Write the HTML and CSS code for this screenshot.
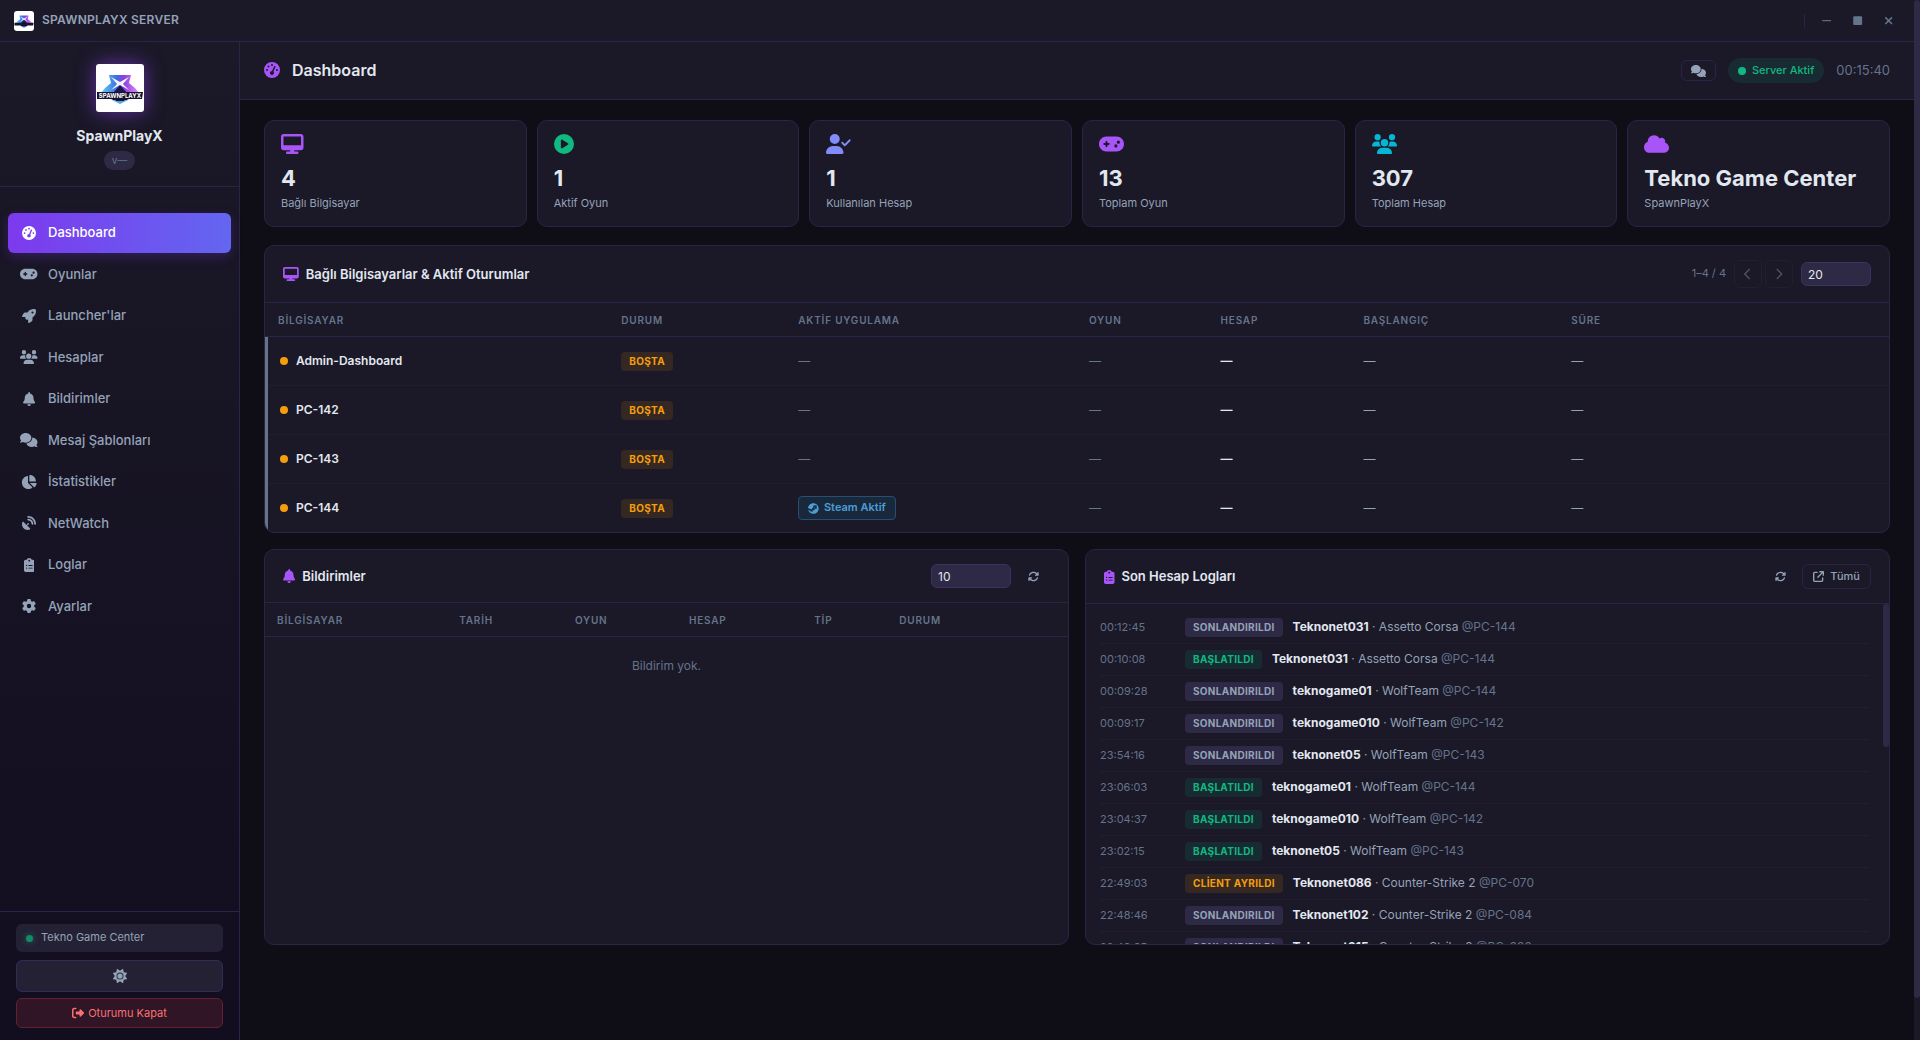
FILE: index.html
```html
<!DOCTYPE html>
<html lang="tr">
<head>
    <meta charset="UTF-8">
    <meta name="viewport" content="width=device-width, initial-scale=1.0">
    <title>SpawnPlayX Server</title>
    <link rel="stylesheet" href="styles.css">
</head>
<body>

<!-- Icon shapes, reused with <use> -->
<svg class="icon-defs" aria-hidden="true">
    <defs>
        <path id="i-gauge" d="M0 256a256 256 0 1 1 512 0A256 256 0 1 1 0 256zM288 96a32 32 0 1 0 -64 0 32 32 0 1 0 64 0zM256 416c35.3 0 64-28.7 64-64c0-17.4-6.9-33.1-18.1-44.6L366 161.7c5.3-12.1-.2-26.3-12.3-31.6s-26.3 .2-31.6 12.3L257.9 288c-.6 0-1.3 0-1.9 0c-35.3 0-64 28.7-64 64s28.7 64 64 64zM176 144a32 32 0 1 0 -64 0 32 32 0 1 0 64 0zM96 288a32 32 0 1 0 0-64 32 32 0 1 0 0 64zm352-32a32 32 0 1 0 -64 0 32 32 0 1 0 64 0z"/>
        <path id="i-gamepad" d="M192 64C86 64 0 150 0 256S86 448 192 448H448c106 0 192-86 192-192s-86-192-192-192H192zM496 168a40 40 0 1 1 0 80 40 40 0 1 1 0-80zM392 304a40 40 0 1 1 80 0 40 40 0 1 1 -80 0zM168 200c0-13.3 10.7-24 24-24s24 10.7 24 24v32h32c13.3 0 24 10.7 24 24s-10.7 24-24 24H216v32c0 13.3-10.7 24-24 24s-24-10.7-24-24V280H136c-13.3 0-24-10.7-24-24s10.7-24 24-24h32V200z"/>
        <path id="i-rocket" d="M156.6 384.9L125.7 354c-8.5-8.5-11.5-20.8-7.7-32.2c3-8.9 7-20.5 11.8-33.8L24 288c-8.6 0-16.6-4.6-20.9-12.1s-4.2-16.7 .2-24.1l52.5-88.5c13-21.9 36.5-35.3 61.9-35.3l82.3 0c2.4-4 4.8-7.7 7.2-11.3C289.1-4.1 411.1-8.1 483.9 5.3c11.6 2.1 20.6 11.2 22.8 22.8c13.4 72.9 9.3 194.8-111.4 276.7c-3.5 2.4-7.3 4.8-11.3 7.2v82.3c0 25.4-13.4 49-35.3 61.9l-88.5 52.5c-7.4 4.4-16.6 4.5-24.1 .2s-12.1-12.2-12.1-20.9V380.8c-14.1 4.9-26.4 8.9-35.7 11.9c-11.2 3.6-23.4 .5-31.8-7.8zM384 168a40 40 0 1 0 0-80 40 40 0 1 0 0 80z"/>
        <path id="i-users" d="M144 0a80 80 0 1 1 0 160A80 80 0 1 1 144 0zM512 0a80 80 0 1 1 0 160A80 80 0 1 1 512 0zM0 298.7C0 239.8 47.8 192 106.7 192h42.7c15.9 0 31 3.5 44.6 9.7c-1.3 7.2-1.9 14.7-1.9 22.3c0 38.2 16.8 72.5 43.3 96c-.2 0-.4 0-.7 0H21.3C9.6 320 0 310.4 0 298.7zM405.3 320c-.2 0-.4 0-.7 0c26.6-23.5 43.3-57.8 43.3-96c0-7.6-.7-15-1.9-22.3c13.6-6.3 28.7-9.7 44.6-9.7h42.7C592.2 192 640 239.8 640 298.7c0 11.8-9.6 21.3-21.3 21.3H405.3zM224 224a96 96 0 1 1 192 0 96 96 0 1 1 -192 0zM128 485.3C128 411.7 187.7 352 261.3 352H378.7C452.3 352 512 411.7 512 485.3c0 14.7-11.9 26.7-26.7 26.7H154.7c-14.7 0-26.7-11.9-26.7-26.7z"/>
        <path id="i-bell" d="M224 0c-17.7 0-32 14.3-32 32V51.2C119 66 64 130.6 64 208v18.8c0 47-17.3 92.4-48.5 127.6l-7.4 8.3c-8.4 9.4-10.4 22.9-5.3 34.4S19.4 416 32 416H416c12.6 0 24-7.4 29.2-18.9s3.1-25-5.3-34.4l-7.4-8.3C401.3 319.2 384 273.9 384 226.8V208c0-77.4-55-142-128-156.8V32c0-17.7-14.3-32-32-32zm45.3 493.3c12-12 18.7-28.3 18.7-45.3H224 160c0 17 6.7 33.3 18.7 45.3s28.3 18.7 45.3 18.7s33.3-6.7 45.3-18.7z"/>
        <path id="i-comments" d="M208 352c114.9 0 208-78.8 208-176S322.9 0 208 0S0 78.8 0 176c0 38.6 14.7 74.3 39.6 103.4c-3.5 9.4-8.7 17.7-14.2 24.7c-4.8 6.2-9.7 11-13.3 14.3c-1.8 1.6-3.3 2.9-4.3 3.7c-.5 .4-.9 .7-1.1 .8l-.2 .2C1 327.2-1.4 334.4 .8 340.9S9.1 352 16 352c21.8 0 43.8-5.6 62.1-12.5c9.2-3.5 17.8-7.4 25.2-11.4C134.1 343.3 169.8 352 208 352zM448 176c0 112.3-99.1 196.9-216.5 207C255.8 457.4 336.4 512 432 512c38.2 0 73.9-8.7 104.7-23.9c7.5 4 16 7.9 25.2 11.4c18.3 6.9 40.3 12.5 62.1 12.5c6.9 0 13.1-4.5 15.2-11.1c2.1-6.6-.2-13.8-5.8-17.9l-.2-.2c-.2-.2-.6-.4-1.1-.8c-1-.8-2.5-2-4.3-3.7c-3.6-3.3-8.5-8.1-13.3-14.3c-5.5-7-10.7-15.4-14.2-24.7c24.9-29 39.6-64.7 39.6-103.4c0-92.8-84.9-168.9-192.6-175.5c.4 5.1 .6 10.3 .6 15.5z"/>
        <path id="i-pie" d="M304 240V16.6c0-9 7-16.6 16-16.6C443.7 0 544 100.3 544 224c0 9-7.6 16-16.6 16H304zM32 272C32 150.7 122.1 50.3 239 34.3c9.2-1.3 17 6.1 17 15.4V288L412.5 444.5c6.7 6.7 6.2 17.7-1.5 23.1C371.8 495.6 323.8 512 272 512C139.5 512 32 404.6 32 272zm526.4 16c9.3 0 16.6 7.8 15.4 17c-7.7 55.9-34.6 105.6-73.9 142.3c-6 5.6-15.4 5.2-21.2-.7L320 288H558.4z"/>
        <path id="i-dish" d="M192 32c0-17.7 14.3-32 32-32C383.1 0 512 128.9 512 288c0 17.7-14.3 32-32 32s-32-14.3-32-32C448 164.3 347.7 64 224 64c-17.7 0-32-14.3-32-32zM60.6 220.6L164.7 324.7l28.4-28.4c-.7-2.6-1.1-5.4-1.1-8.3c0-17.7 14.3-32 32-32s32 14.3 32 32s-14.3 32-32 32c-2.9 0-5.6-.4-8.3-1.1l-28.4 28.4L291.4 451.4c14.5 14.5 11.8 38.8-7.3 46.3C260.5 506.9 234.9 512 208 512C93.1 512 0 418.9 0 304c0-26.9 5.1-52.5 14.4-76.1c7.5-19 31.8-21.8 46.3-7.3zM224 96c106 0 192 86 192 192c0 17.7-14.3 32-32 32s-32-14.3-32-32c0-70.7-57.3-128-128-128c-17.7 0-32-14.3-32-32s14.3-32 32-32z"/>
        <path id="i-clipboard" d="M192 0c-41.8 0-77.4 26.7-90.5 64H64C28.7 64 0 92.7 0 128V448c0 35.3 28.7 64 64 64H320c35.3 0 64-28.7 64-64V128c0-35.3-28.7-64-64-64H282.5C269.4 26.7 233.8 0 192 0zm0 64a32 32 0 1 1 0 64 32 32 0 1 1 0-64zM72 272a24 24 0 1 1 48 0 24 24 0 1 1 -48 0zm104-16H304c8.8 0 16 7.2 16 16s-7.2 16-16 16H176c-8.8 0-16-7.2-16-16s7.2-16 16-16zM72 368a24 24 0 1 1 48 0 24 24 0 1 1 -48 0zm88 0c0-8.8 7.2-16 16-16H304c8.8 0 16 7.2 16 16s-7.2 16-16 16H176c-8.8 0-16-7.2-16-16z"/>
        <path id="i-gear" d="M495.9 166.6c3.2 8.7 .5 18.4-6.4 24.6l-43.3 39.4c1.1 8.3 1.7 16.8 1.7 25.4s-.6 17.1-1.7 25.4l43.3 39.4c6.9 6.2 9.6 15.9 6.4 24.6c-4.4 11.9-9.7 23.3-15.8 34.3l-4.7 8.1c-6.6 11-14 21.4-22.1 31.2c-5.9 7.2-15.7 9.6-24.5 6.8l-55.7-17.7c-13.4 10.3-28.2 18.9-44 25.4l-12.5 57.1c-2 9.1-9 16.3-18.2 17.8c-13.8 2.3-28 3.5-42.5 3.5s-28.7-1.2-42.5-3.5c-9.2-1.5-16.2-8.7-18.2-17.8l-12.5-57.1c-15.8-6.5-30.6-15.1-44-25.4L83.1 425.9c-8.8 2.8-18.6 .3-24.5-6.8c-8.1-9.8-15.5-20.2-22.1-31.2l-4.7-8.1c-6.1-11-11.4-22.4-15.8-34.3c-3.2-8.7-.5-18.4 6.4-24.6l43.3-39.4C64.6 273.1 64 264.6 64 256s.6-17.1 1.7-25.4L22.4 191.2c-6.9-6.2-9.6-15.9-6.4-24.6c4.4-11.9 9.7-23.3 15.8-34.3l4.7-8.1c6.6-11 14-21.4 22.1-31.2c5.9-7.2 15.7-9.6 24.5-6.8l55.7 17.7c13.4-10.3 28.2-18.9 44-25.4l12.5-57.1c2-9.1 9-16.3 18.2-17.8C227.3 1.2 241.5 0 256 0s28.7 1.2 42.5 3.5c9.2 1.5 16.2 8.7 18.2 17.8l12.5 57.1c15.8 6.5 30.6 15.1 44 25.4l55.7-17.7c8.8-2.8 18.6-.3 24.5 6.8c8.1 9.8 15.5 20.2 22.1 31.2l4.7 8.1c6.1 11 11.4 22.4 15.8 34.3zM256 336a80 80 0 1 0 0-160 80 80 0 1 0 0 160z"/>
        <path id="i-desktop" d="M64 0C28.7 0 0 28.7 0 64V352c0 35.3 28.7 64 64 64H240l-10.7 32H160c-17.7 0-32 14.3-32 32s14.3 32 32 32H416c17.7 0 32-14.3 32-32s-14.3-32-32-32H346.7L336 416H512c35.3 0 64-28.7 64-64V64c0-35.3-28.7-64-64-64H64zM512 64V288H64V64H512z"/>
        <path id="i-play" d="M0 256a256 256 0 1 1 512 0A256 256 0 1 1 0 256zM188.3 147.1c-7.6 4.2-12.3 12.3-12.3 20.9V344c0 8.7 4.7 16.7 12.3 20.9s16.8 4.1 24.3-.5l144-88c7.1-4.4 11.5-12.1 11.5-20.5s-4.4-16.1-11.5-20.5l-144-88c-7.4-4.5-16.7-4.7-24.3-.5z"/>
        <path id="i-user-check" d="M96 128a128 128 0 1 1 256 0A128 128 0 1 1 96 128zM0 482.3C0 383.8 79.8 304 178.3 304h91.4C368.2 304 448 383.8 448 482.3c0 16.4-13.3 29.7-29.7 29.7H29.7C13.3 512 0 498.7 0 482.3zM625 177L497 305c-9.4 9.4-24.6 9.4-33.9 0l-64-64c-9.4-9.4-9.4-24.6 0-33.9s24.6-9.4 33.9 0l47 47L591 143c9.4-9.4 24.6-9.4 33.9 0s9.4 24.6 0 33.9z"/>
        <path id="i-cloud" d="M0 336c0 79.5 64.5 144 144 144H512c70.7 0 128-57.3 128-128c0-61.9-44-113.6-102.4-125.4c4.1-10.7 6.4-22.4 6.4-34.6c0-53-43-96-96-96c-19.7 0-38.1 6-53.3 16.2C367 64.2 315.3 32 256 32C167.6 32 96 103.6 96 192c0 2.7 .1 5.4 .2 8.1C40.2 219.8 0 273.2 0 336z"/>
        <path id="i-left" d="M9.4 233.4c-12.5 12.5-12.5 32.8 0 45.3l192 192c12.5 12.5 32.8 12.5 45.3 0s12.5-32.8 0-45.3L77.3 256 246.6 86.6c12.5-12.5 12.5-32.8 0-45.3s-32.8-12.5-45.3 0l-192 192z"/>
        <path id="i-right" d="M310.6 233.4c12.5 12.5 12.5 32.8 0 45.3l-192 192c-12.5 12.5-32.8 12.5-45.3 0s-12.5-32.8 0-45.3L242.7 256 73.4 86.6c-12.5-12.5-12.5-32.8 0-45.3s32.8-12.5 45.3 0l192 192z"/>
        <path id="i-rotate" d="M105.1 202.6c7.7-21.8 20.2-42.3 37.8-59.8c62.5-62.5 163.8-62.5 226.3 0L386.3 160H352c-17.7 0-32 14.3-32 32s14.3 32 32 32H463.5c0 0 0 0 0 0h.4c17.7 0 32-14.3 32-32V80c0-17.7-14.3-32-32-32s-32 14.3-32 32v35.2L414.4 97.6c-87.5-87.5-229.3-87.5-316.8 0C73.2 122 55.6 150.7 44.8 181.4c-5.9 16.7 2.9 34.9 19.5 40.8s34.9-2.9 40.8-19.5zM39 289.3c-5 1.5-9.8 4.2-13.7 8.2c-4 4-6.7 8.8-8.1 14c-.3 1.2-.6 2.5-.8 3.8c-.3 1.7-.4 3.4-.4 5.1V432c0 17.7 14.3 32 32 32s32-14.3 32-32V396.9l17.6 17.5 0 0c87.5 87.4 229.3 87.4 316.7 0c24.4-24.4 42.1-53.1 52.9-83.7c5.9-16.7-2.9-34.9-19.5-40.8s-34.9 2.9-40.8 19.5c-7.7 21.8-20.2 42.3-37.8 59.8c-62.5 62.5-163.8 62.5-226.3 0l-.1-.1L125.6 352H160c17.7 0 32-14.3 32-32s-14.3-32-32-32H48.4c-1.6 0-3.2 .1-4.8 .3s-3.1 .5-4.6 1z"/>
        <path id="i-external" d="M320 0c-17.7 0-32 14.3-32 32s14.3 32 32 32h82.7L201.4 265.4c-12.5 12.5-12.5 32.8 0 45.3s32.8 12.5 45.3 0L448 109.3V192c0 17.7 14.3 32 32 32s32-14.3 32-32V32c0-17.7-14.3-32-32-32H320zM80 32C35.8 32 0 67.8 0 112V432c0 44.2 35.8 80 80 80H400c44.2 0 80-35.8 80-80V320c0-17.7-14.3-32-32-32s-32 14.3-32 32V432c0 8.8-7.2 16-16 16H80c-8.8 0-16-7.2-16-16V112c0-8.8 7.2-16 16-16H192c17.7 0 32-14.3 32-32s-14.3-32-32-32H80z"/>
        <path id="i-logout" d="M377.9 105.9L500.7 228.7c7.2 7.2 11.3 17.1 11.3 27.3s-4.1 20.1-11.3 27.3L377.9 406.1c-6.4 6.4-15 9.9-24 9.9c-18.7 0-33.9-15.2-33.9-33.9l0-62.1-128 0c-17.7 0-32-14.3-32-32l0-64c0-17.7 14.3-32 32-32l128 0 0-62.1c0-18.7 15.2-33.9 33.9-33.9c9 0 17.6 3.6 24 9.9zM160 96L96 96c-17.7 0-32 14.3-32 32l0 256c0 17.7 14.3 32 32 32l64 0c17.7 0 32 14.3 32 32s-14.3 32-32 32l-64 0c-53 0-96-43-96-96L0 128C0 75 43 32 96 32l64 0c17.7 0 32 14.3 32 32s-14.3 32-32 32z"/>
        <path id="i-sun" d="M361.5 1.2c5 2.1 8.6 6.6 9.6 11.9L391 121l107.9 19.8c5.3 1 9.8 4.6 11.9 9.6s1.5 10.7-1.6 15.2L446.9 256l62.3 90.3c3.1 4.5 3.7 10.2 1.6 15.2s-6.6 8.6-11.9 9.6L391 391 371.1 498.9c-1 5.3-4.6 9.8-9.6 11.9s-10.7 1.5-15.2-1.6L256 446.9l-90.3 62.3c-4.5 3.1-10.2 3.7-15.2 1.6s-8.6-6.6-9.6-11.9L121 391 13.1 371.1c-5.3-1-9.8-4.6-11.9-9.6s-1.5-10.7 1.6-15.2L65.1 256 2.8 165.7c-3.1-4.5-3.7-10.2-1.6-15.2s6.6-8.6 11.9-9.6L121 121 140.9 13.1c1-5.3 4.6-9.8 9.6-11.9s10.7-1.5 15.2 1.6L256 65.1 346.3 2.8c4.5-3.1 10.2-3.7 15.2-1.6zM160 256a96 96 0 1 1 192 0 96 96 0 1 1 -192 0zm224 0a128 128 0 1 0 -256 0 128 128 0 1 0 256 0z"/>
        <path id="i-steam" d="M496 256c0 137-111.2 248-248.4 248-113.8 0-209.6-76.3-239-180.4l95.2 39.3c6.4 32.1 34.9 56.4 68.9 56.4 39.2 0 71.9-32.4 70.2-73.5l84.5-60.2c52.1 1.3 95.8-40.9 95.8-93.5 0-51.6-42-93.5-93.7-93.5s-93.7 42-93.7 93.5v1.2L176.6 279c-15.5-.9-30.7 3.4-43.5 12.1L0 236.1C10.2 108.4 117.1 8 247.6 8 384.8 8 496 119 496 256zM155.7 384.3l-30.5-12.6a52.79 52.79 0 0 0 27.2 25.8c26.9 11.2 57.8-1.6 69-28.5 5.4-13 5.5-27.3.1-40.3-5.4-13-15.5-23.2-28.5-28.6-12.9-5.4-26.7-5.2-38.9-.6l31.5 13c19.8 8.2 29.2 30.9 20.9 50.7-8.3 19.9-31 29.2-50.8 21zm173.8-129.9c-34.4 0-62.4-28-62.4-62.3s28-62.3 62.4-62.3 62.4 28 62.4 62.3-27.9 62.3-62.4 62.3zm.1-15.6c25.9 0 46.9-21 46.9-46.8 0-25.9-21-46.8-46.9-46.8s-46.9 21-46.9 46.8c.1 25.8 21.1 46.8 46.9 46.8z"/>

        <linearGradient id="logo-grad" x1="0" y1="0" x2="1" y2="0">
            <stop offset="0" stop-color="#5fd0f7"/>
            <stop offset=".42" stop-color="#3b6fe0"/>
            <stop offset=".6" stop-color="#8b3fe0"/>
            <stop offset="1" stop-color="#e58cf5"/>
        </linearGradient>
        <g id="logo">
            <rect width="48" height="48" fill="#fff"/>
            <path d="M13 11h22l-2 8 6 5 4 5H5l4-5 6-5z" fill="url(#logo-grad)"/>
            <path d="M24 21l7 8H17z" fill="#1d1650"/>
            <path d="M15 13l9 5 9-5-6 7 6 6-9-5-9 5 6-6z" fill="#f4f2ff"/>
            <path d="M1 28h46l-1 7H33l-9 4-9-4H1z" fill="#17132f"/>
            <path d="M16 36h16l-8 4z" fill="#5aa9e6"/>
            <path d="M19 34h10l-1 3h-8z" fill="#17132f"/>
        </g>
    </defs>
</svg>

<div class="page">
<div class="window">

    <header class="titlebar">
        <div class="titlebar-left">
            <svg class="titlebar-logo" viewBox="0 0 48 48" aria-hidden="true"><use href="#logo"/></svg>
            <span>SPAWNPLAYX SERVER</span>
        </div>
        <div class="window-controls">
            <button type="button" aria-label="Küçült"><svg class="icon" viewBox="0 0 12 12"><path d="M2 5.5h8v1H2z"/></svg></button>
            <button type="button" aria-label="Büyüt"><svg class="icon" viewBox="0 0 12 12"><rect x="2" y="2" width="8" height="8" rx="1"/></svg></button>
            <button type="button" aria-label="Kapat"><svg class="icon icon-stroke" viewBox="0 0 12 12"><path d="M3 3l6 6M9 3l-6 6"/></svg></button>
        </div>
    </header>

    <div class="shell">
        <aside class="sidebar">
            <div class="brand">
                <svg class="brand-logo" viewBox="0 0 48 48" aria-hidden="true">
                    <use href="#logo"/>
                    <text x="24" y="34" class="brand-logo-text">SPAWNPLAYX</text>
                </svg>
                <div class="brand-name">SpawnPlayX</div>
                <span class="version">v—</span>
            </div>

            <nav class="nav">
                <a href="#" class="nav-item active"><span class="nav-icon"><svg class="icon" viewBox="0 0 512 512"><use href="#i-gauge"/></svg></span>Dashboard</a>
                <a href="#" class="nav-item"><span class="nav-icon"><svg class="icon" viewBox="0 0 640 512"><use href="#i-gamepad"/></svg></span>Oyunlar</a>
                <a href="#" class="nav-item"><span class="nav-icon"><svg class="icon" viewBox="0 0 512 512"><use href="#i-rocket"/></svg></span>Launcher'lar</a>
                <a href="#" class="nav-item"><span class="nav-icon"><svg class="icon" viewBox="0 0 640 512"><use href="#i-users"/></svg></span>Hesaplar</a>
                <a href="#" class="nav-item"><span class="nav-icon"><svg class="icon" viewBox="0 0 448 512"><use href="#i-bell"/></svg></span>Bildirimler</a>
                <a href="#" class="nav-item"><span class="nav-icon"><svg class="icon" viewBox="0 0 640 512"><use href="#i-comments"/></svg></span>Mesaj Şablonları</a>
                <a href="#" class="nav-item"><span class="nav-icon"><svg class="icon" viewBox="0 0 576 512"><use href="#i-pie"/></svg></span>İstatistikler</a>
                <a href="#" class="nav-item"><span class="nav-icon"><svg class="icon" viewBox="0 0 512 512"><use href="#i-dish"/></svg></span>NetWatch</a>
                <a href="#" class="nav-item"><span class="nav-icon"><svg class="icon" viewBox="0 0 384 512"><use href="#i-clipboard"/></svg></span>Loglar</a>
                <a href="#" class="nav-item"><span class="nav-icon"><svg class="icon" viewBox="0 0 512 512"><use href="#i-gear"/></svg></span>Ayarlar</a>
            </nav>

            <div class="sidebar-footer">
                <div class="cafe"><span class="cafe-dot"></span>Tekno Game Center</div>
                <button type="button" class="theme-btn" aria-label="Tema"><svg class="icon" viewBox="0 0 512 512"><use href="#i-sun"/></svg></button>
                <button type="button" class="logout-btn"><svg class="icon" viewBox="0 0 512 512"><use href="#i-logout"/></svg>Oturumu Kapat</button>
            </div>
        </aside>

        <main class="main">
            <div class="topbar">
                <h1 class="page-title"><svg class="icon" viewBox="0 0 512 512"><use href="#i-gauge"/></svg>Dashboard</h1>
                <div class="topbar-right">
                    <button type="button" class="chat-btn" aria-label="Mesajlar"><svg class="icon" viewBox="0 0 640 512"><use href="#i-comments"/></svg></button>
                    <span class="server-status"><span class="server-dot"></span>Server Aktif</span>
                    <span class="clock">00:15:40</span>
                </div>
            </div>

            <div class="content">
                <section class="stats">
                    <div class="card stat">
                        <svg class="icon stat-icon purple" viewBox="0 0 576 512"><use href="#i-desktop"/></svg>
                        <div class="stat-value">4</div>
                        <div class="stat-label">Bağlı Bilgisayar</div>
                    </div>
                    <div class="card stat">
                        <svg class="icon stat-icon green" viewBox="0 0 512 512"><use href="#i-play"/></svg>
                        <div class="stat-value">1</div>
                        <div class="stat-label">Aktif Oyun</div>
                    </div>
                    <div class="card stat">
                        <svg class="icon stat-icon indigo" viewBox="0 0 640 512"><use href="#i-user-check"/></svg>
                        <div class="stat-value">1</div>
                        <div class="stat-label">Kullanılan Hesap</div>
                    </div>
                    <div class="card stat">
                        <svg class="icon stat-icon purple" viewBox="0 0 640 512"><use href="#i-gamepad"/></svg>
                        <div class="stat-value">13</div>
                        <div class="stat-label">Toplam Oyun</div>
                    </div>
                    <div class="card stat">
                        <svg class="icon stat-icon cyan" viewBox="0 0 640 512"><use href="#i-users"/></svg>
                        <div class="stat-value">307</div>
                        <div class="stat-label">Toplam Hesap</div>
                    </div>
                    <div class="card stat">
                        <svg class="icon stat-icon purple" viewBox="0 0 640 512"><use href="#i-cloud"/></svg>
                        <div class="stat-value">Tekno Game Center</div>
                        <div class="stat-label">SpawnPlayX</div>
                    </div>
                </section>

                <section class="card sessions">
                    <div class="card-header">
                        <h2><svg class="icon" viewBox="0 0 576 512"><use href="#i-desktop"/></svg>Bağlı Bilgisayarlar &amp; Aktif Oturumlar</h2>
                        <div class="pager">
                            <span class="pager-info">1–4 / 4</span>
                            <div class="pager-buttons">
                                <button type="button" disabled aria-label="Önceki"><svg class="icon" viewBox="0 0 320 512"><use href="#i-left"/></svg></button>
                                <button type="button" disabled aria-label="Sonraki"><svg class="icon" viewBox="0 0 320 512"><use href="#i-right"/></svg></button>
                            </div>
                            <select class="select select-sm" aria-label="Sayfa boyutu"><option>20</option></select>
                        </div>
                    </div>
                    <table class="table">
                        <colgroup>
                            <col class="s-pc"><col class="s-status"><col class="s-app"><col class="s-game"><col class="s-account"><col class="s-start"><col>
                        </colgroup>
                        <thead>
                        <tr>
                            <th>BİLGİSAYAR</th>
                            <th>DURUM</th>
                            <th>AKTİF UYGULAMA</th>
                            <th>OYUN</th>
                            <th>HESAP</th>
                            <th>BAŞLANGIÇ</th>
                            <th>SÜRE</th>
                        </tr>
                        </thead>
                        <tbody>
                        <tr>
                            <td class="pc"><span class="pc-dot"></span>Admin-Dashboard</td>
                            <td><span class="badge badge-idle">BOŞTA</span></td>
                            <td class="dim">—</td>
                            <td class="dim">—</td>
                            <td class="account">—</td>
                            <td>—</td>
                            <td>—</td>
                        </tr>
                        <tr>
                            <td class="pc"><span class="pc-dot"></span>PC-142</td>
                            <td><span class="badge badge-idle">BOŞTA</span></td>
                            <td class="dim">—</td>
                            <td class="dim">—</td>
                            <td class="account">—</td>
                            <td>—</td>
                            <td>—</td>
                        </tr>
                        <tr>
                            <td class="pc"><span class="pc-dot"></span>PC-143</td>
                            <td><span class="badge badge-idle">BOŞTA</span></td>
                            <td class="dim">—</td>
                            <td class="dim">—</td>
                            <td class="account">—</td>
                            <td>—</td>
                            <td>—</td>
                        </tr>
                        <tr>
                            <td class="pc"><span class="pc-dot"></span>PC-144</td>
                            <td><span class="badge badge-idle">BOŞTA</span></td>
                            <td><span class="steam"><svg class="icon" viewBox="0 0 496 512"><use href="#i-steam"/></svg>Steam Aktif</span></td>
                            <td class="dim">—</td>
                            <td class="account">—</td>
                            <td>—</td>
                            <td>—</td>
                        </tr>
                        </tbody>
                    </table>
                </section>

                <div class="bottom">
                    <section class="card panel">
                        <div class="card-header">
                            <h2><svg class="icon" viewBox="0 0 448 512"><use href="#i-bell"/></svg>Bildirimler</h2>
                            <div class="actions">
                                <select class="select" aria-label="Bildirim sayısı"><option>10</option></select>
                                <button type="button" class="refresh-btn" aria-label="Yenile"><svg class="icon" viewBox="0 0 512 512"><use href="#i-rotate"/></svg></button>
                            </div>
                        </div>
                        <table class="table">
                            <colgroup>
                                <col class="n-pc"><col class="n-date"><col class="n-game"><col class="n-account"><col class="n-type"><col>
                            </colgroup>
                            <thead>
                            <tr>
                                <th>BİLGİSAYAR</th>
                                <th>TARİH</th>
                                <th>OYUN</th>
                                <th>HESAP</th>
                                <th>TİP</th>
                                <th>DURUM</th>
                            </tr>
                            </thead>
                            <tbody>
                            <tr><td colspan="6" class="empty">Bildirim yok.</td></tr>
                            </tbody>
                        </table>
                    </section>

                    <section class="card panel">
                        <div class="card-header">
                            <h2><svg class="icon" viewBox="0 0 384 512"><use href="#i-clipboard"/></svg>Son Hesap Logları</h2>
                            <div class="actions">
                                <button type="button" class="refresh-btn" aria-label="Yenile"><svg class="icon" viewBox="0 0 512 512"><use href="#i-rotate"/></svg></button>
                                <a href="#" class="all-btn"><svg class="icon" viewBox="0 0 512 512"><use href="#i-external"/></svg>Tümü</a>
                            </div>
                        </div>
                        <div class="log-area">
                            <ul class="logs">
                                <li><time>00:12:45</time><span class="badge badge-ended">SONLANDIRILDI</span><p><b>Teknonet031</b> · Assetto Corsa <small>@PC-144</small></p></li>
                                <li><time>00:10:08</time><span class="badge badge-started">BAŞLATILDI</span><p><b>Teknonet031</b> · Assetto Corsa <small>@PC-144</small></p></li>
                                <li><time>00:09:28</time><span class="badge badge-ended">SONLANDIRILDI</span><p><b>teknogame01</b> · WolfTeam <small>@PC-144</small></p></li>
                                <li><time>00:09:17</time><span class="badge badge-ended">SONLANDIRILDI</span><p><b>teknogame010</b> · WolfTeam <small>@PC-142</small></p></li>
                                <li><time>23:54:16</time><span class="badge badge-ended">SONLANDIRILDI</span><p><b>teknonet05</b> · WolfTeam <small>@PC-143</small></p></li>
                                <li><time>23:06:03</time><span class="badge badge-started">BAŞLATILDI</span><p><b>teknogame01</b> · WolfTeam <small>@PC-144</small></p></li>
                                <li><time>23:04:37</time><span class="badge badge-started">BAŞLATILDI</span><p><b>teknogame010</b> · WolfTeam <small>@PC-142</small></p></li>
                                <li><time>23:02:15</time><span class="badge badge-started">BAŞLATILDI</span><p><b>teknonet05</b> · WolfTeam <small>@PC-143</small></p></li>
                                <li><time>22:49:03</time><span class="badge badge-idle">CLİENT AYRILDI</span><p><b>Teknonet086</b> · Counter-Strike 2 <small>@PC-070</small></p></li>
                                <li><time>22:48:46</time><span class="badge badge-ended">SONLANDIRILDI</span><p><b>Teknonet102</b> · Counter-Strike 2 <small>@PC-084</small></p></li>
                                <li><time>22:48:35</time><span class="badge badge-ended">SONLANDIRILDI</span><p><b>Teknonet015</b> · Counter-Strike 2 <small>@PC-082</small></p></li>
                            </ul>
                            <div class="scroll-track"><div class="log-thumb"></div></div>
                        </div>
                    </section>
                </div>
            </div>
        </main>
    </div>
</div>
<div class="scroll-track page-track"><div class="page-thumb"></div></div>
</div>

</body>
</html>
```
FILE: styles.css
```css
* {
    box-sizing: border-box;
}
:root {
    --bg: #0f0d15;
    --card: #1b1827;
    --border: #2a2447;
    --line: #221e30;
    --input: #2e2945;
    --text: #e2e8f0;
    --muted: #94a3b8;
    --dim: #64748b;
    --purple: #a855f7;
    --green: #10b981;
    --orange: #f59e0b;
}
body {
    margin: 0;
    font-family: Inter, "Noto Sans", sans-serif;
    font-size: 14px;
    line-height: 1.4;
    color: var(--text);
    background: var(--bg);
}
h1, h2, p, ul {
    margin: 0;
    padding: 0;
}
button, select {
    font-family: inherit;
    color: inherit;
}
button {
    padding: 0;
    border: none;
    background: none;
    display: flex;
    align-items: center;
    justify-content: center;
}
a {
    color: inherit;
    text-decoration: none;
}
.icon-defs {
    display: block;
    width: 0;
    height: 0;
}
.icon {
    height: 1em;
    width: auto;
    flex: none;
    display: block;
    fill: currentColor;
    fill-rule: evenodd;
}
.icon-stroke {
    fill: none;
    stroke: currentColor;
    stroke-width: 1.4;
}

/* Page frame */
.page {
    display: flex;
    height: 100vh;
    overflow: hidden;
}
.window {
    flex: 1;
    min-width: 0;
    display: flex;
    flex-direction: column;
}
.scroll-track {
    width: 6px;
    flex: none;
}
.page-track {
    background: var(--card);
}
.page-thumb {
    height: 96%;
    border-radius: 3px;
    background: var(--input);
}
.titlebar {
    height: 42px;
    padding: 0 10px 0 14px;
    display: flex;
    align-items: center;
    justify-content: space-between;
    background: var(--card);
    border-bottom: 1px solid var(--border);
}
.titlebar-left {
    display: flex;
    align-items: center;
    gap: 8px;
    font-size: 12px;
    font-weight: 600;
    letter-spacing: 0.02em;
    color: var(--muted);
}
.titlebar-logo {
    width: 20px;
    height: 20px;
    border-radius: 3px;
}
.window-controls {
    display: flex;
    align-items: center;
    height: 14px;
    padding-left: 6px;
    border-left: 1px solid var(--border);
    font-size: 12px;
    color: var(--dim);
}
.window-controls button {
    width: 31px;
    height: 28px;
}
.shell {
    flex: 1;
    min-height: 0;
    display: flex;
}

/* Sidebar */
.sidebar {
    width: 240px;
    flex: none;
    display: flex;
    flex-direction: column;
    background: linear-gradient(180deg, var(--card), #120e20);
    border-right: 1px solid var(--border);
}
.brand {
    height: 145px;
    padding-top: 22px;
    display: flex;
    flex-direction: column;
    align-items: center;
    border-bottom: 1px solid var(--border);
}
.brand-logo {
    width: 48px;
    height: 48px;
    border-radius: 3px;
    box-shadow: 0 0 20px rgba(147, 70, 247, 0.6);
}
.brand-logo-text {
    font-size: 6px;
    font-weight: 700;
    text-anchor: middle;
    fill: #fff;
}
.brand-name {
    margin-top: 14px;
    font-size: 14px;
    font-weight: 700;
}
.version {
    margin-top: 5px;
    padding: 0 8px;
    border-radius: 10px;
    font-size: 10px;
    line-height: 19px;
    background: var(--input);
    color: var(--dim);
}
.nav {
    flex: 1;
    padding: 26px 8px 0;
    display: flex;
    flex-direction: column;
    gap: 2px;
}
.nav-item {
    display: flex;
    align-items: center;
    gap: 10px;
    padding: 10px 12px;
    border-radius: 6px;
    font-size: 13px;
    font-weight: 500;
    line-height: 1.5;
    color: var(--muted);
}
.nav-icon {
    width: 18px;
    display: flex;
    justify-content: center;
    font-size: 14px;
}
.nav-item.active {
    color: #fff;
    background: linear-gradient(90deg, #7c3aed, #6366f1);
    box-shadow: 0 4px 12px rgba(124, 58, 237, 0.25);
}
.sidebar-footer {
    padding: 12px 16px;
    display: flex;
    flex-direction: column;
    border-top: 1px solid var(--border);
    font-size: 11px;
}
.cafe {
    height: 28px;
    padding: 0 10px;
    display: flex;
    align-items: center;
    gap: 8px;
    border-radius: 6px;
    background: #242134;
    color: var(--muted);
}
.cafe-dot {
    width: 7px;
    height: 7px;
    border-radius: 50%;
    background: #158a67;
    box-shadow: 0 0 6px rgba(16, 185, 129, 0.5);
}
.theme-btn {
    height: 32px;
    margin: 8px 0 6px;
    border: 1px solid #332b56;
    border-radius: 6px;
    background: #242134;
    color: var(--muted);
    font-size: 14px;
}
.logout-btn {
    height: 30px;
    gap: 4px;
    border: 1px solid #66202f;
    border-radius: 6px;
    background: #2f1525;
    color: #f87171;
    font-size: 11px;
}
.logout-btn .icon {
    font-size: 12px;
}

/* Top bar */
.main {
    flex: 1;
    min-width: 0;
}
.topbar {
    height: 58px;
    padding: 0 24px;
    display: flex;
    align-items: center;
    justify-content: space-between;
    background: var(--card);
    border-bottom: 1px solid var(--border);
}
.page-title {
    display: flex;
    align-items: center;
    gap: 12px;
    font-size: 16px;
    font-weight: 600;
}
.page-title .icon,
.card-header h2 .icon {
    color: var(--purple);
}
.topbar-right {
    display: flex;
    align-items: center;
    gap: 12px;
}
.chat-btn {
    width: 35px;
    height: 21px;
    border: 1px solid var(--border);
    border-radius: 6px;
    color: var(--muted);
    font-size: 12px;
}
.server-status {
    height: 25px;
    padding: 0 10px;
    display: flex;
    align-items: center;
    gap: 6px;
    border-radius: 20px;
    font-size: 11px;
    font-weight: 500;
    background: rgba(16, 185, 129, 0.12);
    color: var(--green);
}
.server-dot {
    width: 8px;
    height: 8px;
    border-radius: 50%;
    background: var(--green);
}
.clock {
    font-size: 13px;
    color: var(--dim);
}

/* Content */
.content {
    padding: 20px 24px;
}
.card {
    background: var(--card);
    border: 1px solid var(--border);
    border-radius: 10px;
}
.stats {
    display: grid;
    grid-template-columns: repeat(6, 1fr);
    gap: 10px;
    margin-bottom: 18px;
}
.stat {
    height: 107px;
    padding: 13px 16px;
}
.stat-icon {
    font-size: 20px;
}
.stat-value {
    margin-top: 9px;
    font-size: 22px;
    font-weight: 700;
    line-height: 30px;
}
.stat-label {
    margin-top: 3px;
    font-size: 11px;
    color: var(--muted);
}
.purple {
    color: var(--purple);
}
.green {
    color: var(--green);
}
.indigo {
    color: #818cf8;
}
.cyan {
    color: #06b6d4;
}
.card-header {
    padding: 14px 18px;
    display: flex;
    align-items: center;
    justify-content: space-between;
    border-bottom: 1px solid var(--border);
}
.card-header h2 {
    display: flex;
    align-items: center;
    gap: 7px;
    font-size: 13px;
    font-weight: 600;
}
.card-header h2 .icon {
    font-size: 14px;
}
.pager {
    display: flex;
    align-items: center;
    gap: 8px;
}
.pager-info {
    font-size: 11px;
    color: var(--dim);
}
.pager-buttons {
    display: flex;
    gap: 3px;
}
.pager-buttons button {
    width: 28px;
    height: 28px;
    border: 1px solid var(--input);
    border-radius: 6px;
    color: var(--muted);
    font-size: 12px;
    opacity: 0.4;
}
.select {
    width: 80px;
    height: 24px;
    padding: 0 6px;
    appearance: none;
    border: 1px solid #3a3260;
    border-radius: 6px;
    background: var(--input);
    color: var(--text);
    font-size: 12px;
}
.select-sm {
    width: 70px;
}

/* Tables */
.table {
    width: 100%;
    table-layout: fixed;
    border-collapse: separate;
    border-spacing: 0;
}
.table th {
    height: 34px;
    padding: 0 12px;
    text-align: left;
    font-size: 10px;
    font-weight: 600;
    letter-spacing: 0.08em;
    color: var(--dim);
    border-bottom: 1px solid var(--border);
}
.table td {
    height: 49px;
    padding: 0 12px;
    font-size: 12px;
    color: var(--muted);
    box-shadow: inset 0 -1px var(--line);
}
.table tr:last-child td {
    height: 48px;
    box-shadow: none;
}
.table .dim {
    color: var(--dim);
}
.table .account {
    color: var(--text);
    font-weight: 600;
}
.sessions {
    margin-bottom: 16px;
    overflow: hidden;
}
.sessions th:first-child {
    padding-left: 13px;
}
.table .pc {
    border-left: 3px solid var(--dim);
    font-weight: 600;
    color: var(--text);
}
.pc-dot {
    display: inline-block;
    width: 8px;
    height: 8px;
    margin-right: 8px;
    border-radius: 50%;
    background: var(--orange);
}
.s-pc { width: 21.2%; }
.s-status { width: 10.9%; }
.s-app { width: 17.9%; }
.s-game { width: 8.1%; }
.s-account { width: 8.8%; }
.s-start { width: 12.8%; }
.n-pc { width: 22.7%; }
.n-date { width: 14.4%; }
.n-game { width: 14.2%; }
.n-account { width: 15.6%; }
.n-type { width: 10.6%; }
.table tr:last-child .empty {
    height: 58px;
    text-align: center;
    color: var(--dim);
}
.badge {
    display: inline-block;
    padding: 0 8px;
    border-radius: 4px;
    font-size: 10px;
    font-weight: 700;
    line-height: 19px;
    letter-spacing: 0.03em;
    white-space: nowrap;
}
.badge-idle {
    background: rgba(245, 158, 11, 0.12);
    color: var(--orange);
}
.badge-ended {
    background: var(--input);
    color: var(--muted);
}
.badge-started {
    background: rgba(16, 185, 129, 0.12);
    color: var(--green);
}
.steam {
    display: inline-flex;
    align-items: center;
    gap: 5px;
    height: 24px;
    padding: 0 9px;
    border: 1px solid #26506f;
    border-radius: 4px;
    background: #1a283c;
    color: #4a9fd8;
    font-size: 11px;
    font-weight: 600;
}

/* Bottom panels */
.bottom {
    display: grid;
    grid-template-columns: 1fr 1fr;
    gap: 16px;
}
.panel {
    height: 396px;
    display: flex;
    flex-direction: column;
    overflow: hidden;
}
.actions {
    display: flex;
    align-items: center;
    gap: 5px;
}
.refresh-btn {
    width: 34px;
    height: 24px;
    font-size: 11px;
    color: var(--muted);
}
.all-btn {
    height: 25px;
    padding: 0 10px;
    display: flex;
    align-items: center;
    gap: 6px;
    border: 1px solid var(--border);
    border-radius: 6px;
    font-size: 11px;
    font-weight: 500;
    color: var(--muted);
}
.log-area {
    flex: 1;
    min-height: 0;
    display: flex;
    overflow: hidden;
}
.logs {
    flex: 1;
    padding: 8px 14px;
    list-style: none;
}
.logs li {
    height: 32px;
    display: flex;
    align-items: center;
    gap: 10px;
    border-bottom: 1px solid var(--line);
    font-size: 12px;
    color: var(--muted);
}
.logs time {
    width: 75px;
    font-size: 11px;
    color: var(--dim);
}
.logs b {
    font-weight: 700;
    color: var(--text);
}
.logs small {
    font-size: 12px;
    color: var(--dim);
}
.log-thumb {
    height: 42%;
    border-radius: 3px;
    background: var(--input);
}
```
